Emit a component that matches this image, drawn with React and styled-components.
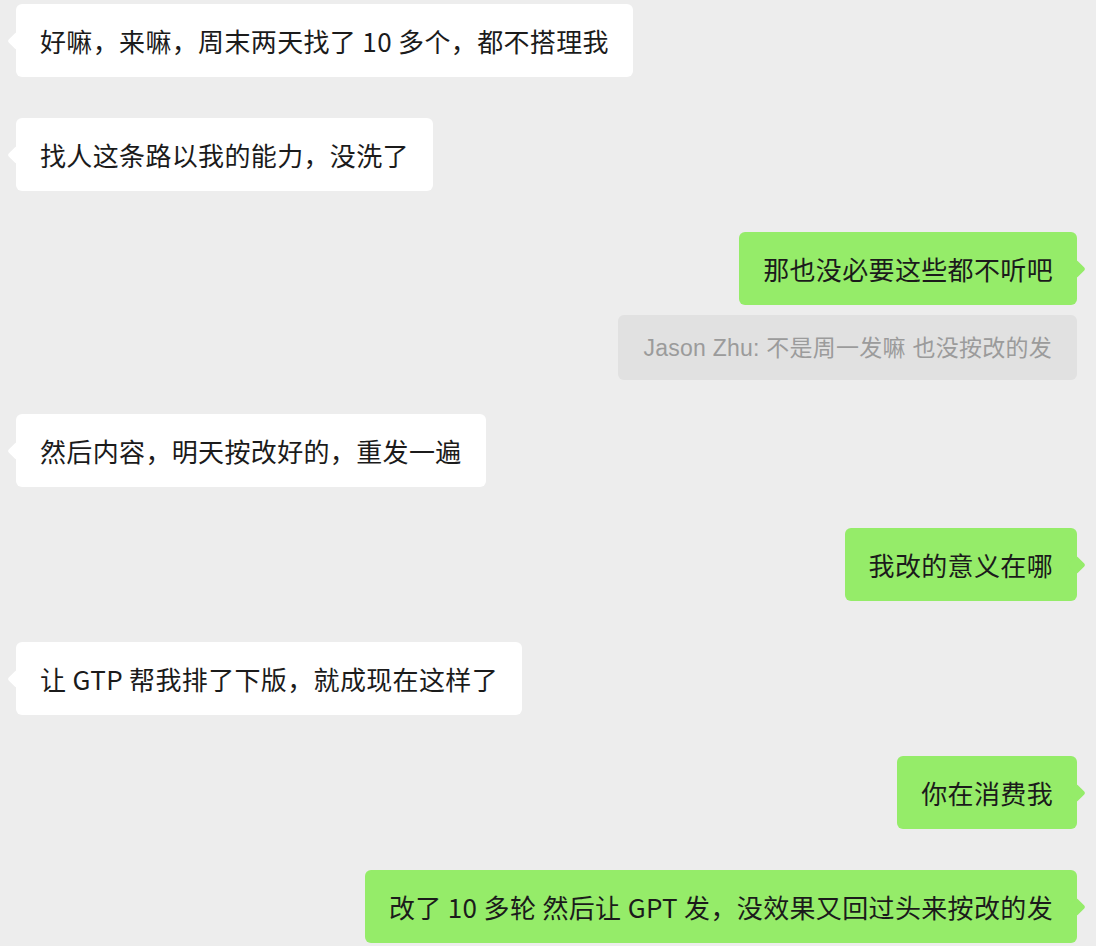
import React from "react";
import styled, { createGlobalStyle } from "styled-components";

const Global = createGlobalStyle`
  html, body {
    margin: 0;
    padding: 0;
    background: #ededed;
  }
  body {
    font-family: "Noto Sans CJK SC", "Noto Sans", "Liberation Sans", sans-serif;
    -webkit-font-smoothing: antialiased;
  }
`;

const Chat = styled.div`
  display: flex;
  flex-direction: column;
  padding: 4px 19px 0 16px;
  min-height: 946px;
  box-sizing: border-box;
`;

const Group = styled.div`
  display: flex;
  flex-direction: column;
  align-items: ${(p) => (p.$mine ? "flex-end" : "flex-start")};
  gap: 10px;
  margin-top: ${(p) => p.$top}px;
`;

const Bubble = styled.div`
  position: relative;
  box-sizing: border-box;
  height: 73px;
  display: flex;
  align-items: center;
  padding: 0 24px 0 24px;
  border-radius: 6px;
  background: ${(p) => (p.$mine ? "#95ec69" : "#ffffff")};
  color: #1b1b1b;
  font-size: 26px;
  letter-spacing: 0.35px;
  line-height: 37px;
  white-space: nowrap;

  &::before {
    content: "";
    position: absolute;
    top: 50%;
    ${(p) => (p.$mine ? "right: -6px;" : "left: -6px;")}
    width: 13px;
    height: 13px;
    border-radius: 2px;
    background: inherit;
    transform: translateY(-50%) rotate(45deg);
  }
`;

const BubbleText = styled.span`
  position: relative;
  z-index: 1;
`;

const Quote = styled.div`
  box-sizing: border-box;
  height: 65px;
  display: flex;
  align-items: center;
  padding: 0 25px;
  border-radius: 6px;
  background: #e1e1e1;
  color: #9b9b9b;
  font-family: "Liberation Sans", "Noto Sans CJK SC", sans-serif;
  font-size: 23px;
  letter-spacing: 0.25px;
  line-height: 30px;
  white-space: nowrap;
`;

const messages = [
  { mine: false, top: 0, text: "好嘛，来嘛，周末两天找了 10 多个，都不搭理我" },
  { mine: false, top: 41, text: "找人这条路以我的能力，没洗了" },
  {
    mine: true,
    top: 41,
    text: "那也没必要这些都不听吧",
    quote: "Jason Zhu: 不是周一发嘛 也没按改的发",
  },
  { mine: false, top: 34, text: "然后内容，明天按改好的，重发一遍" },
  { mine: true, top: 41, text: "我改的意义在哪" },
  { mine: false, top: 41, text: "让 GTP 帮我排了下版，就成现在这样了" },
  { mine: true, top: 41, text: "你在消费我" },
  { mine: true, top: 41, text: "改了 10 多轮 然后让 GPT 发，没效果又回过头来按改的发" },
];

export default function App() {
  return (
    <>
      <Global />
      <Chat>
        {messages.map((m, i) => (
          <Group key={i} $mine={m.mine} $top={m.top}>
            <Bubble $mine={m.mine}>
              <BubbleText>{m.text}</BubbleText>
            </Bubble>
            {m.quote && <Quote>{m.quote}</Quote>}
          </Group>
        ))}
      </Chat>
    </>
  );
}
